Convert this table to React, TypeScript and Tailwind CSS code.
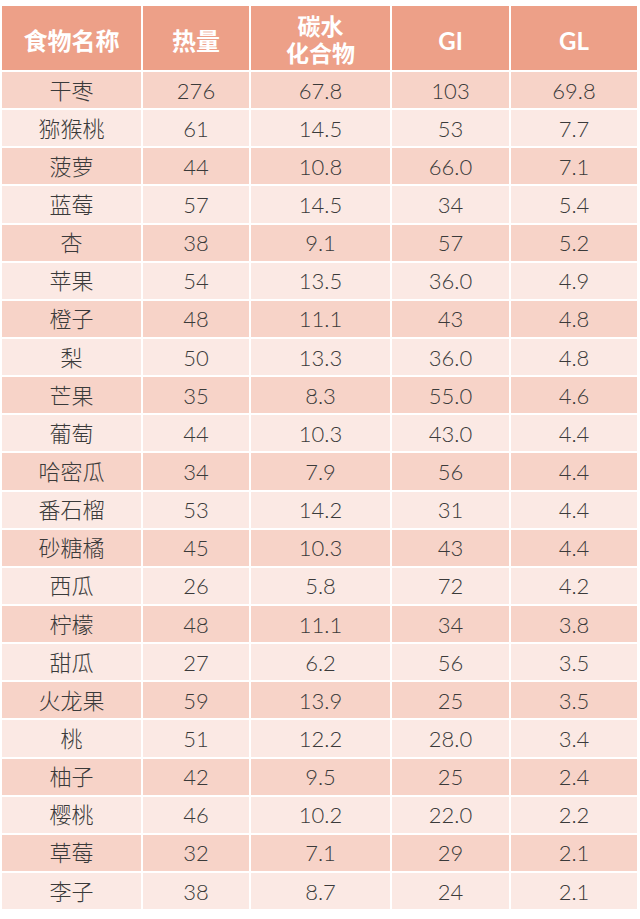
import React from "react";

const rows: [string, string, string, string, string][] = [
  ["干枣", "276", "67.8", "103", "69.8"],
  ["猕猴桃", "61", "14.5", "53", "7.7"],
  ["菠萝", "44", "10.8", "66.0", "7.1"],
  ["蓝莓", "57", "14.5", "34", "5.4"],
  ["杏", "38", "9.1", "57", "5.2"],
  ["苹果", "54", "13.5", "36.0", "4.9"],
  ["橙子", "48", "11.1", "43", "4.8"],
  ["梨", "50", "13.3", "36.0", "4.8"],
  ["芒果", "35", "8.3", "55.0", "4.6"],
  ["葡萄", "44", "10.3", "43.0", "4.4"],
  ["哈密瓜", "34", "7.9", "56", "4.4"],
  ["番石榴", "53", "14.2", "31", "4.4"],
  ["砂糖橘", "45", "10.3", "43", "4.4"],
  ["西瓜", "26", "5.8", "72", "4.2"],
  ["柠檬", "48", "11.1", "34", "3.8"],
  ["甜瓜", "27", "6.2", "56", "3.5"],
  ["火龙果", "59", "13.9", "25", "3.5"],
  ["桃", "51", "12.2", "28.0", "3.4"],
  ["柚子", "42", "9.5", "25", "2.4"],
  ["樱桃", "46", "10.2", "22.0", "2.2"],
  ["草莓", "32", "7.1", "29", "2.1"],
  ["李子", "38", "8.7", "24", "2.1"],
];

export default function App() {
  return (
    <div
      className="w-[640px] h-[919px] bg-white pt-[6px] pl-[2px]"
      style={{ fontFamily: 'Lato, "Noto Sans CJK SC", sans-serif' }}
    >
      <div className="grid grid-cols-[139px_106px_139px_117px_126px] gap-x-[2px] gap-y-[2px] grid-rows-[64px_repeat(22,36.15px)]">
        <div className="bg-[#eda088] text-white font-bold text-[24px] flex items-center justify-center pt-[6px]">食物名称</div>
        <div className="bg-[#eda088] text-white font-bold text-[24px] flex items-center justify-center pt-[6px]">热量</div>
        <div className="bg-[#eda088] text-white font-bold text-[23px] leading-[27px] flex flex-col items-center justify-center pt-[4px]">
          <span>碳水</span>
          <span>化合物</span>
        </div>
        <div className="bg-[#eda088] text-white font-bold text-[24px] flex items-center justify-center pt-[6px]">GI</div>
        <div className="bg-[#eda088] text-white font-bold text-[24px] flex items-center justify-center pt-[6px]">GL</div>
        {rows.map((r, i) =>
          r.map((c, j) => (
            <div
              key={`${i}-${j}`}
              className={`${i % 2 === 0 ? "bg-[#f7d3c8]" : "bg-[#fbe9e4]"} text-[#3a3a3a] text-[22px] font-light flex items-center justify-center`}
            >
              {c}
            </div>
          ))
        )}
      </div>
    </div>
  );
}
